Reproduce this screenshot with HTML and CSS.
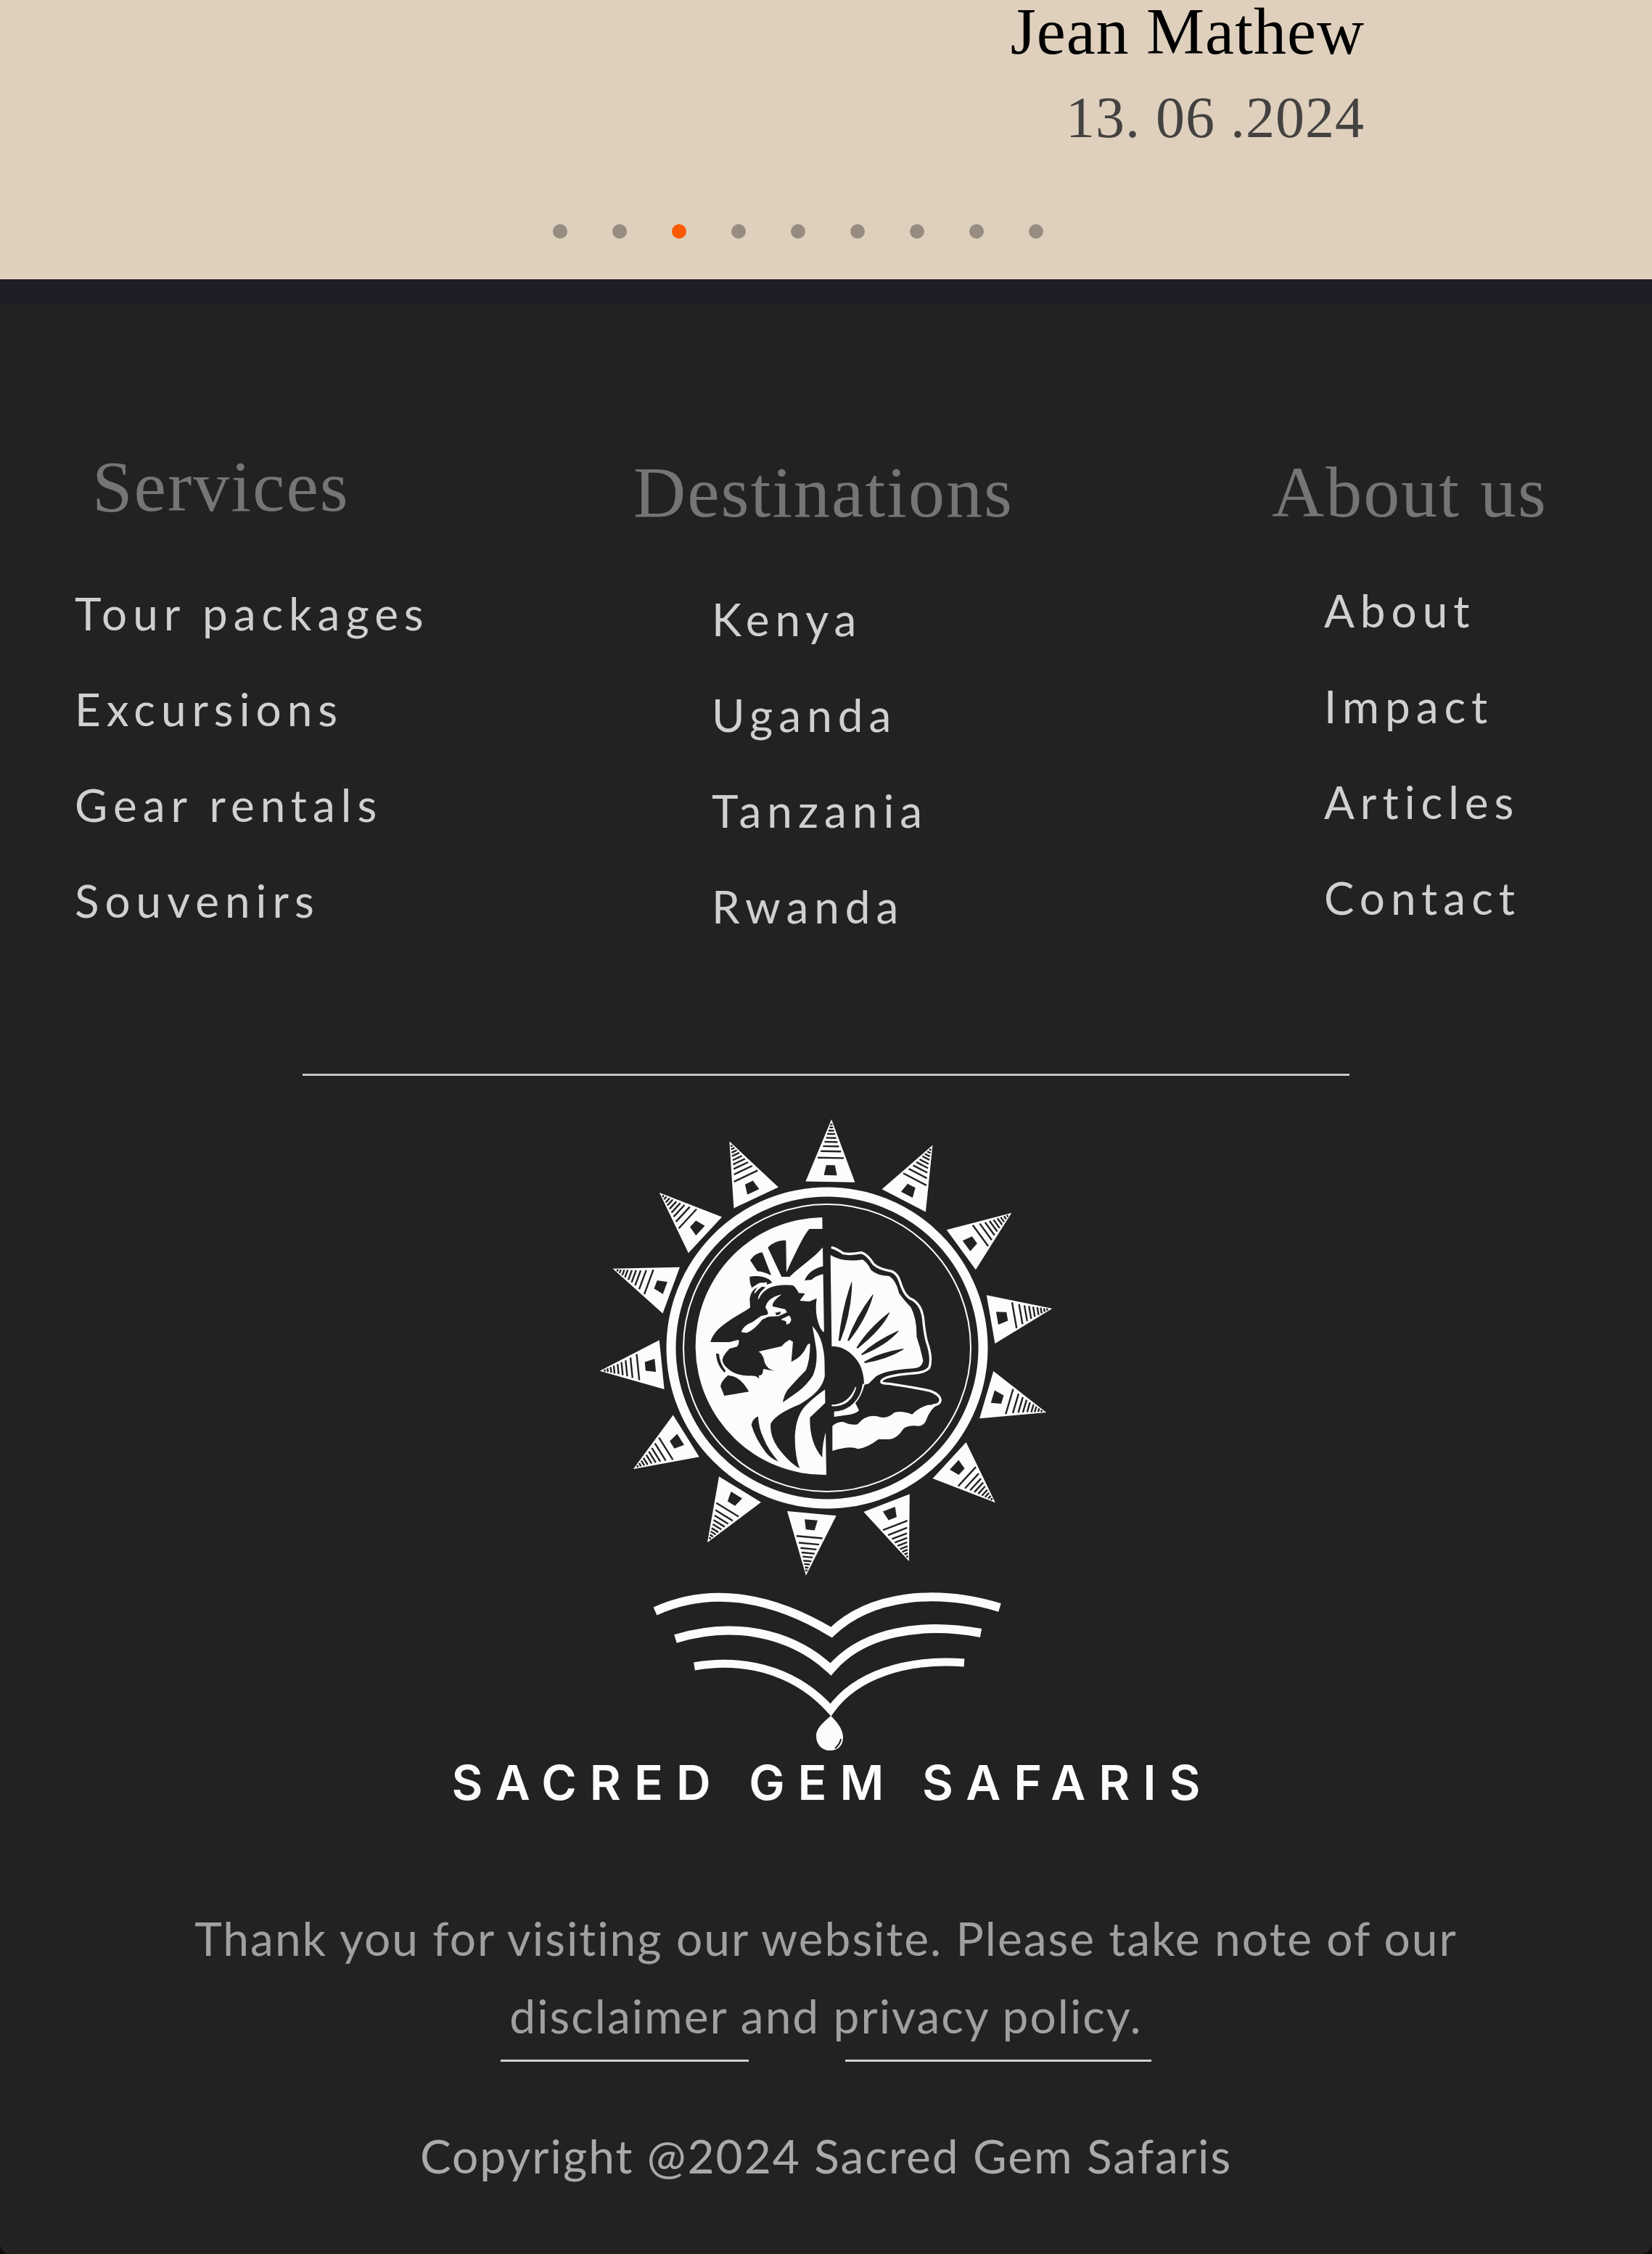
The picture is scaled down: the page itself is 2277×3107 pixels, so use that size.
FILE: index.html
```html
<!DOCTYPE html>
<html lang="en">
<head>
<meta charset="utf-8">
<meta name="viewport" content="width=device-width, initial-scale=1">
<title>Sacred Gem Safaris</title>
<link rel="stylesheet" href="styles.css">
</head>
<body>
<section class="testimonial">
  <div class="author">
    <p class="author-name">Jean Mathew</p>
    <p class="author-date">13. 06 .2024</p>
  </div>
  <div class="dots">
    <button class="dot" aria-label="Review 1"></button>
    <button class="dot" aria-label="Review 2"></button>
    <button class="dot dot-active" aria-label="Review 3"></button>
    <button class="dot" aria-label="Review 4"></button>
    <button class="dot" aria-label="Review 5"></button>
    <button class="dot" aria-label="Review 6"></button>
    <button class="dot" aria-label="Review 7"></button>
    <button class="dot" aria-label="Review 8"></button>
    <button class="dot" aria-label="Review 9"></button>
  </div>
</section>
<footer class="footer">
  <nav class="columns">
    <section class="column services">
      <h2 class="heading">Services</h2>
      <ul class="links">
        <li><a href="#">Tour packages</a></li>
        <li><a href="#">Excursions</a></li>
        <li><a href="#">Gear rentals</a></li>
        <li><a href="#">Souvenirs</a></li>
      </ul>
    </section>
    <section class="column destinations">
      <h2 class="heading">Destinations</h2>
      <ul class="links">
        <li><a href="#">Kenya</a></li>
        <li><a href="#">Uganda</a></li>
        <li><a href="#">Tanzania</a></li>
        <li><a href="#">Rwanda</a></li>
      </ul>
    </section>
    <section class="column about">
      <h2 class="heading">About us</h2>
      <ul class="links">
        <li><a href="#">About</a></li>
        <li><a href="#">Impact</a></li>
        <li><a href="#">Articles</a></li>
        <li><a href="#">Contact</a></li>
      </ul>
    </section>
  </nav>
  <hr class="divider">
  <div class="brand">
    <svg class="logo" viewBox="820 1540 640 880" aria-hidden="true">
      <defs>
        <g id="spike">
          <path fill="#fcfcfc" d="M0-315L-34-229H34Z"/>
          <path fill="#222" d="M-6-252H6L9-238H-9Z"/>
          <path stroke="#222" stroke-width="2.4" fill="none" d="M-18-262H18M-14-271H14M-11-278H11M-9-284H9M-7-289.500H7M-5.500-295H5.500M-4-299.500H4M-2.500-304H2.500M-1.500-308H1.500"/>
        </g>
      </defs>
      <g transform="translate(1141 1859)">
        <use href="#spike" transform="rotate(1.1)"/>
        <use href="#spike" transform="rotate(27.500)"/>
        <use href="#spike" transform="rotate(53.800)"/>
        <use href="#spike" transform="rotate(80.100)"/>
        <use href="#spike" transform="rotate(106.400)"/>
        <use href="#spike" transform="rotate(132.600)"/>
        <use href="#spike" transform="rotate(159)"/>
        <use href="#spike" transform="rotate(185.300)"/>
        <use href="#spike" transform="rotate(211.600)"/>
        <use href="#spike" transform="rotate(238)"/>
        <use href="#spike" transform="rotate(264.200)"/>
        <use href="#spike" transform="rotate(290.300)"/>
        <use href="#spike" transform="rotate(312.800)"/>
        <use href="#spike" transform="rotate(334.700)"/>
        <circle r="215" fill="none" stroke="#fcfcfc" stroke-width="13"/>
        <circle r="198" fill="none" stroke="#fcfcfc" stroke-width="2"/>
      </g>
      <g transform="translate(950 1660) scale(.33333)">
        <!-- lion -->
        <path fill="#fcfcfc" d="M553 57A532 532 0 0 0 570 1122Z"/>
        <g fill="#222">
          <path d="M328 182C350 160 380 150 403 153L405 285C430 230 475 130 500 105H560L556 180C520 225 460 260 418 303H385Z"/>
          <path d="M255 235Q275 205 305 202L342 297Q310 282 285 280Z"/>
          <path d="M253 302Q300 296 330 312Q345 322 345 328L325 335Q310 322 290 330L262 348Q252 330 253 302Z"/>
          <path d="M480 318Q500 270 562 258V290Q520 300 510 315Z"/>
          <path d="M253 395Q258 350 300 342L330 350Q370 333 432 338Q448 350 455 370L482 372L460 402L500 405L530 392Q520 460 545 515L556 530H580V768H566Q520 800 490 830Q445 870 440 960Q440 1050 460 1095Q420 1075 370 1010Q335 960 340 910Q360 870 460 830Q530 790 553 745Q567 715 566 690Q566 640 552 580Q540 535 512 507Q522 560 528 600Q535 660 515 710Q490 750 450 780L390 822Q395 790 410 770Q450 725 485 690Q502 650 503 582Q495 575 488 592Q470 635 425 655L432 572L418 563Q400 572 385 590L290 612Q310 625 315 658Q325 685 355 692L320 686Q306 680 308 695L303 708L290 712L292 724L278 714L260 712Q200 715 165 685Q135 660 142 640Q145 625 170 600L200 592Q212 580 207 563L170 573H91Q95 555 110 535Q130 505 220 452Q245 438 255 430Z"/>
          <path d="M163 710Q135 735 132 755L148 795L250 778Q220 725 185 715Z"/>
          <path d="M502 885L572 818V930Q552 990 553 1050Q500 990 502 885Z"/>
          <path d="M288 880Q265 890 260 915Q275 970 320 1030Q340 1055 372 1067Q330 1020 310 970Q290 930 288 880Z"/>
          <path d="M114 620Q115 665 148 699L154 692Q128 660 126 622Z"/>
        </g>
        <g fill="#fcfcfc">
          <path d="M218 532Q225 505 265 490L300 465L325 460Q335 455 318 430Q325 390 385 376Q345 405 347 425L400 437L407 450L372 466L330 468L305 480Q270 525 240 535Z"/>
          <path d="M385 478L416 463Q432 480 418 495L405 502Q410 482 385 482Z"/>
          <path d="M270 372Q285 335 322 324L325 334Q295 345 278 368ZM287 397Q290 355 350 330L352 340Q305 360 292 392Z"/>
        </g>
        <path fill="#222" d="M358 452L382 447L378 458L364 462Z"/>
        <!-- shell -->
        <path fill="none" stroke="#fcfcfc" stroke-width="10" d="M590 181Q610 185 640 206Q670 212 715 203Q740 210 765 250Q785 270 840 280Q865 290 875 325Q890 375 915 392Q960 410 970 470Q975 530 985 570Q1010 640 995 680Q975 700 930 702Q800 712 797 737Q797 745 830 745Q960 765 1000 775Q1040 790 1042 812Q1038 835 1010 833"/>
        <path fill="#fcfcfc" d="M587 213Q640 245 720 232Q740 245 755 275Q780 298 830 300Q860 320 870 370Q890 400 920 430Q945 480 943 550Q960 600 970 650Q965 680 930 682Q800 690 770 720L745 745L726 750Q725 680 690 640Q650 590 592 590Z"/>
        <path fill="#222" d="M674 325Q635 430 620 568L628 568Q675 450 676 325ZM762 376Q690 470 657 567L664 568Q740 470 764 377ZM831 449Q740 520 694 597L700 599Q800 520 832 451ZM867 526Q770 570 714 623L718 627Q820 585 868 529ZM889 600Q790 615 726 655L729 660Q820 645 889 604Z"/>
        <path fill="#fcfcfc" d="M690 758Q662 830 592 832V838Q672 842 694 760ZM720 745Q715 795 680 828Q650 858 602 860V882L670 872Q700 865 705 855L690 825Q715 800 728 748Z"/>
        <path fill="#fcfcfc" d="M595 920Q610 903 640 903Q680 920 700 912Q735 870 780 880Q820 895 850 865Q880 855 925 872Q950 845 990 833L1032 830Q1000 850 985 890Q975 920 950 920Q910 915 890 930Q860 975 830 975H785Q740 1010 700 1015Q670 1000 595 1023Z"/>
      </g>
      <!-- open book and ink drop -->
      <g fill="none" stroke="#fcfcfc" stroke-width="12">
        <path d="M904 2222C985 2185 1070 2205 1147 2251C1200 2200 1290 2190 1379 2217"/>
        <path d="M932 2260C1010 2236 1090 2250 1146 2302C1190 2250 1270 2237 1353 2252"/>
        <path stroke-width="11" d="M958 2298C1040 2284 1105 2312 1146 2358C1180 2310 1250 2287 1330 2293"/>
      </g>
      <path fill="#fcfcfc" d="M1146 2366C1154 2374 1163 2384 1163 2396C1163 2408 1155 2414 1145 2414C1134 2414 1126 2406 1126 2394C1126 2382 1138 2374 1146 2366Z"/>
      <path fill="none" stroke="#222" stroke-width="2" d="M1160 2398Q1159 2405 1152 2411"/>
    </svg>
    <p class="brand-name">SACRED GEM SAFARIS</p>
  </div>
  <div class="notice">
    <p>Thank you for visiting our website. Please take note of our<br><a href="#">disclaimer</a> and <a href="#">privacy policy.</a></p>
    <div class="rules"><span class="rule rule-short"></span><span class="rule rule-long"></span></div>
  </div>
  <p class="copyright">Copyright @2024 Sacred Gem Safaris</p>
</footer>
</body>
</html>
```
FILE: styles.css
```css
* { box-sizing: border-box; }
body {
  display: flex;
  flex-direction: column;
  min-height: 100vh;
  margin: 0;
  background: #0c0c0c;
  font-family: Lato, "Open Sans", sans-serif;
  color: #d0d0d0;
}
p, h2, ul { margin: 0; padding: 0; }
a { color: inherit; text-decoration: none; }
.testimonial {
  padding-bottom: 56px;
  background: #ded0bd;
  font-family: "Liberation Serif", serif;
}
.author {
  padding-right: 396px;
  text-align: right;
  letter-spacing: 1px;
}
.author-name {
  font-size: 90px;
  line-height: 88px;
  color: #000;
}
.author-date {
  margin-top: 12px;
  font-size: 80px;
  line-height: 124px;
  color: #444240;
}
.dots {
  display: flex;
  justify-content: center;
  gap: 62px;
  margin-top: 85px;
  padding-right: 78px;
}
.dot {
  width: 20px;
  height: 20px;
  padding: 0;
  border: 0;
  border-radius: 50%;
  background: #978c80;
}
.dot-active { background: #fa5a00; }
.footer {
  flex: 1;
  padding-bottom: 80px;
  border-top: 34px solid #1e1c26;
  border-radius: 0 0 14px 14px;
  background: #222;
}
.columns {
  display: grid;
  grid-template-columns: 770fr 880fr 380fr;
  padding: 192px 144px 0 103px;
}
.heading {
  font-family: "Liberation Serif", serif;
  font-weight: 400;
  font-size: 100px;
  line-height: 120px;
  letter-spacing: 2px;
  white-space: nowrap;
  color: #757575;
}
.links {
  padding-top: 48px;
  list-style: none;
  font-size: 62px;
  line-height: 132px;
  letter-spacing: 8px;
  white-space: nowrap;
}
.services .heading { padding-left: 24px; }
.destinations, .about { padding-top: 8px; }
.destinations .links { padding-left: 108px; }
.about .links { padding-top: 36px; padding-left: 72px; }
.divider {
  width: 1443px;
  max-width: 80%;
  height: 3px;
  margin: 165px auto 0;
  border: 0;
  background: #c8c8c8;
}
.brand {
  display: flex;
  flex-direction: column;
  align-items: center;
  padding-top: 56px;
}
.logo { width: 640px; height: 880px; }
.brand-name {
  padding-left: 18px;
  font-family: Inter, sans-serif;
  font-weight: 600;
  font-size: 66px;
  line-height: 76px;
  letter-spacing: 18px;
  color: #fcfcfc;
}
.notice, .copyright {
  font-size: 64px;
  line-height: 107px;
  letter-spacing: 2px;
  text-align: center;
  color: #a0a0a0;
}
.notice { padding-top: 123px; }
.rules {
  display: flex;
  justify-content: center;
  gap: 133px;
  padding-top: 7px;
}
.rule { height: 3px; background: #d0d0d0; }
.rule-short { width: 342px; }
.rule-long { width: 422px; }
.copyright { padding-top: 76px; color: #aaa; }
```
